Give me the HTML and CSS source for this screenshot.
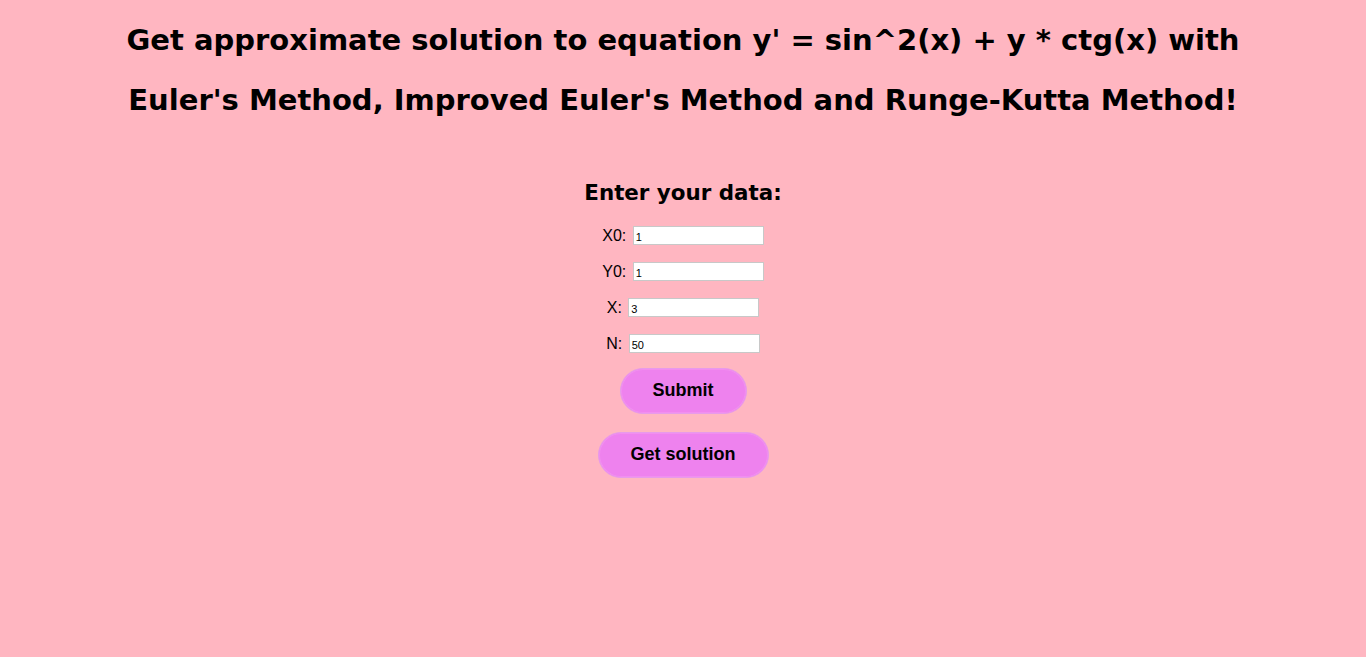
FILE: index.html
```html
<!DOCTYPE html>
<html>
<head>
<meta charset="utf-8">
<link rel="stylesheet" href="styles.css">
</head>
<body>
<h1 class="title">Get approximate solution to equation y' = sin^2(x) + y * ctg(x) with<br>Euler's Method, Improved Euler's Method and Runge-Kutta Method!</h1>
<form class="form">
  <h2 class="form-title">Enter your data:</h2>
  <div class="row"><label>X0:</label> <input class="field" type="text" value="1"></div>
  <div class="row"><label>Y0:</label> <input class="field" type="text" value="1"></div>
  <div class="row"><label>X:</label> <input class="field" type="text" value="3"></div>
  <div class="row row-last"><label>N:</label> <input class="field" type="text" value="50"></div>
  <div class="btn-row"><button type="button" class="btn">Submit</button></div>
  <div class="btn-row"><button type="button" class="btn">Get solution</button></div>
</form>
</body>
</html>
```
FILE: styles.css
```css
html, body {
  margin: 0;
  padding: 0;
  background: #ffb6c1;
  height: 100%;
}
body {
  font-family: "Liberation Sans", Arial, sans-serif;
  color: #000;
}
.title {
  margin: 10px 0 0;
  text-align: center;
  font-family: "DejaVu Sans", Verdana, sans-serif;
  font-weight: bold;
  font-size: 29px;
  line-height: 60px;
}
.form {
  margin-top: 48px;
  text-align: center;
}
.form-title {
  margin: 0 0 18px;
  font-family: "DejaVu Sans", Verdana, sans-serif;
  font-weight: bold;
  font-size: 21.4px;
  line-height: 30px;
}
.row {
  font-size: 16px;
  height: 19px;
  line-height: 19px;
  margin-bottom: 17px;
}
.row-last {
  margin-bottom: 15px;
}
.field {
  box-sizing: border-box;
  width: 131px;
  height: 19px;
  border: 1px solid #c8c8c8;
  background: #fff;
  font-family: "Liberation Sans", Arial, sans-serif;
  font-size: 11px;
  padding: 2px 2px 0;
  vertical-align: top;
  margin: 0 0 0 2px;
}
.btn-row {
  margin-bottom: 18px;
}
.btn {
  font-family: "Liberation Sans", Arial, sans-serif;
  font-weight: bold;
  font-size: 18px;
  line-height: 21px;
  padding: 11px 32px 12px;
  border: 1px solid #e79bea;
  border-radius: 23px;
  background: #ee82ee;
  color: #000;
  box-shadow: inset 0 0 0 1px #f28ef0;
}
```
